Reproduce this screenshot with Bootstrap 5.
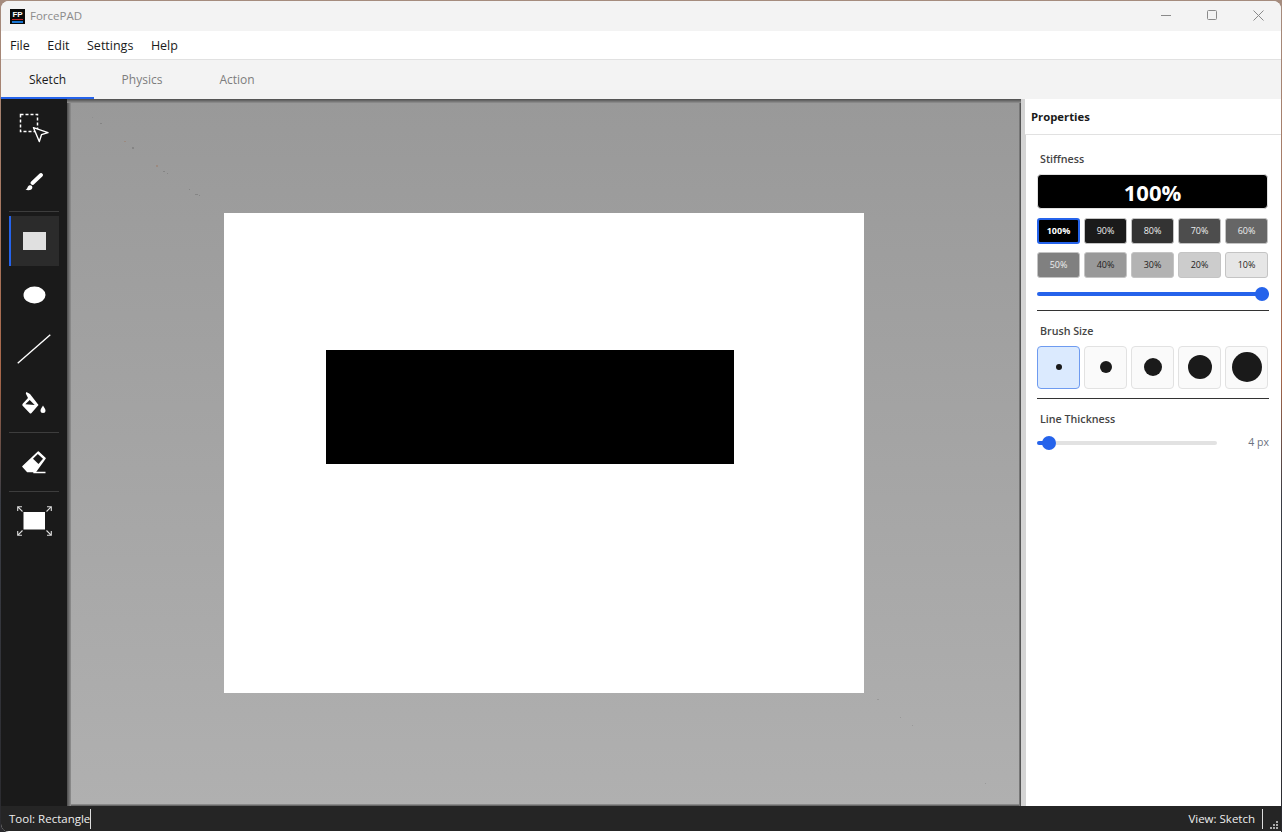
<!DOCTYPE html>
<html lang="en">

<head>
  <meta charset="UTF-8">
  <meta name="viewport" content="width=device-width, initial-scale=1.0">
  <title>ForcePAD</title>
  <link href="https://cdn.jsdelivr.net/npm/bootstrap@5.3.3/dist/css/bootstrap.min.css" rel="stylesheet">
  <style>
    html, body { height: 100%; overflow: hidden; }
    body {
      font-family: "Open Sans", "Noto Sans", sans-serif;
      font-size: 12.5px;
      background: linear-gradient(180deg, #a58c7e 0, #a8674a 45%, #3a3d45 60%, #2a2a2e 100%);
    }
    .app-window {
      margin: 1px 1px 0 1px;
      height: 831px;
      border-radius: 8px 8px 0 8px;
      overflow: hidden;
      background: #fff;
    }
    .title-bar { height: 30px; background: #f3f3f3; color: #8b8b8b; font-size: 11.5px; }
    .app-logo { width: 15px; height: 15px; margin: 0 5px 0 9px; }
    .win-btn { width: 46px; height: 28px; margin-bottom: 2px; }
    .menu-bar { height: 29px; background: #fff; border-bottom: 1px solid #e1e1e1; color: #1a1a1a; font-size: 12.5px; padding: 3px 0 0 9px; gap: 17.5px; }
    .tab-bar { height: 39px; background: #f3f3f3; font-size: 12px; }
    .tab-item { width: 96px; height: 39px; color: #7d7d7d; padding-top: 1px; }
    .tab-item.on { width: 93px; color: #1a1a1a; border-bottom: 2px solid #2563eb; padding-top: 3px; }
    .tab-item.last { width: 94px; }
    .work-area { height: 707px; }
    .tool-rail { width: 66px; background: #1a1a1a; padding: 4px 8px 0; gap: 4px; }
    .tool-btn { width: 50px; height: 50px; }
    .tool-btn.on { background: #2b2b2b; border-left: 2px solid #2563eb; padding-right: 2px; }
    .rail-sep { height: 1px; background: #3d3d3d; }
    .canvas-area {
      width: 954px;
      background: linear-gradient(180deg, #999 0, #b0b0b0 100%);
      box-shadow: inset 0 1px 0 #555, inset 0 2px 0 #666, inset 0 3px 0 #777, inset 0 4px 0 #888,
                  inset 1px 0 0 #555, inset 2px 0 0 #666, inset 3px 0 0 #777, inset 4px 0 0 #888,
                  inset -1px 0 0 #555, inset -2px 0 0 #777, inset 0 -1px 0 #666, inset 0 -2px 0 #888;
      position: relative;
    }
    .canvas-specks { position: absolute; left: 0; top: 0; }
    .paper { position: absolute; left: 157px; top: 114px; width: 640px; height: 480px; background: #fff; }
    .paper-rect { position: absolute; left: 102px; top: 137px; width: 408px; height: 114px; background: #000; }
    .split-bar { width: 5px; background: #d4d4d4; }
    .props-panel { width: 255px; background: #fff; }
    .props-head { height: 36px; margin-left: -1px; padding: 2px 0 0 6px; font-weight: 700; color: #1a1a1a; font-size: 11.3px; border-bottom: 1px solid #e1e1e1; background: #fff; }
    .props-body { padding: 16px 13px 0 11px; }
    .group-label { font-size: 10.7px; font-weight: 600; color: #444; padding-left: 3px; line-height: 16px; }
    .stiff-show { height: 35px; padding-top: 2px; background: #000; color: #fff; border: 1px solid #e0e0e0; border-radius: 4px; font-size: 22px; font-weight: 700; margin-top: 7px; }
    .swatch-row { gap: 4px; margin-top: 8px; }
    .swatch-row:first-child { margin-top: 9px; }
    .swatch-btn { width: 43px; height: 26px; border: 1px solid #c4c4c4; border-radius: 3px; font-size: 9px; font-weight: 400; }
    .swatch-btn.on { border: 2px solid #2563eb; font-weight: 700; }
    .size-row { gap: 4px; margin-top: 7px; }
    .size-btn { width: 43px; height: 43px; padding-bottom: 2px; border: 1px solid #e2e2e2; border-radius: 4px; background: #fafafa; }
    .size-btn.on { background: #dbeafe; border-color: #6e9bf0; }
    .size-dot { background: #1a1a1a; border-radius: 50%; }
    .dark-rule { height: 1px; background: #333; margin: 9px -1px 0 0; }
    .section-top { margin-top: 12px; }
    .app-range { display: block; width: calc(100% + 1px); height: 14px; padding: 0; margin-top: 9px; }
    .app-range::-webkit-slider-runnable-track {
      height: 4px; border-radius: 2px;
      background: linear-gradient(90deg, #2563eb var(--fill), #e2e2e2 var(--fill));
    }
    .app-range::-webkit-slider-thumb { width: 14px; height: 14px; margin-top: -5px; background: #2563eb; border: 0; border-radius: 50%; }
    .thick-row { margin: 8px -1px 0 0; }
    .thick-row .app-range { margin-top: 0; width: 180px; }
    .thick-value { color: #6b7280; font-size: 10.5px; width: 52px; text-align: right; }
    .status-bar { height: 25px; background: #252525; color: #eee; font-size: 11.5px; padding: 0 0 0 8px; }
    .status-sep { width: 1px; height: 20px; background: #ddd; }
    .status-view { margin-right: 7px; }
    .grip { width: 12px; height: 25px; margin-left: 6px; }
  </style>
</head>

<body>
  <div class="app-window d-flex flex-column">

    <div class="title-bar d-flex align-items-center flex-shrink-0">
      <svg class="app-logo" viewBox="0 0 15 15">
        <rect width="15" height="15" fill="#0a0a0a"/>
        <rect x="2" y="10" width="11" height="1" fill="#c62828"/>
        <rect x="2" y="12" width="11" height="2" fill="#1976d2"/>
        <text x="7.5" y="8" font-size="8" font-weight="700" font-family="Liberation Sans, sans-serif" fill="#fff" text-anchor="middle">FP</text>
      </svg>
      <span>ForcePAD</span>
      <div class="d-flex ms-auto">
        <div class="win-btn d-flex align-items-center justify-content-center">
          <svg width="10" height="10"><path d="M0 5.5H10" stroke="#8a8a8a"/></svg>
        </div>
        <div class="win-btn d-flex align-items-center justify-content-center">
          <svg width="10" height="10"><rect x=".5" y=".5" width="9" height="9" rx="1" fill="none" stroke="#8a8a8a"/></svg>
        </div>
        <div class="win-btn d-flex align-items-center justify-content-center">
          <svg width="11" height="11"><path d="M.5 .5L10.5 10.5M10.5 .5L.5 10.5" stroke="#8a8a8a"/></svg>
        </div>
      </div>
    </div>

    <div class="menu-bar d-flex align-items-center flex-shrink-0">
      <span>File</span><span>Edit</span><span>Settings</span><span>Help</span>
    </div>

    <div class="tab-bar d-flex flex-shrink-0">
      <div class="tab-item on d-flex align-items-center justify-content-center">Sketch</div>
      <div class="tab-item d-flex align-items-center justify-content-center">Physics</div>
      <div class="tab-item last d-flex align-items-center justify-content-center">Action</div>
    </div>

    <div class="work-area d-flex flex-shrink-0">
      <div class="tool-rail d-flex flex-column flex-shrink-0">
        <div class="tool-btn d-flex align-items-center justify-content-center">
          <svg width="32" height="30" viewBox="0 0 32 30">
            <rect x="2.500" y="1.500" width="17" height="17" fill="none" stroke="#fff" stroke-width="1.500" stroke-dasharray="3 2"/>
            <path d="M15.500 14.700L30 19.700L23.500 21.700L21.300 28.500Z" fill="#1a1a1a" stroke="#fff" stroke-width="1.400" stroke-linejoin="round"/>
          </svg>
        </div>
        <div class="tool-btn d-flex align-items-center justify-content-center">
          <svg width="18" height="18" viewBox="0 0 18 18">
            <path d="M16 2L7.500 10" stroke="#fff" stroke-width="3.800" stroke-linecap="round"/>
            <path d="M.5 16.500C2.500 16.500 2.200 13.500 4 12.500C6 11.600 7.800 13 7.300 15C6.800 17.200 3 18 .5 16.500Z" fill="#fff"/>
          </svg>
        </div>
        <div class="rail-sep"></div>
        <div class="tool-btn on d-flex align-items-center justify-content-center">
          <svg width="23" height="18"><rect width="23" height="18" fill="#e0e0e0"/></svg>
        </div>
        <div class="tool-btn d-flex align-items-center justify-content-center">
          <svg width="23" height="18"><ellipse cx="11.5" cy="9" rx="11" ry="8.500" fill="#fff"/></svg>
        </div>
        <div class="tool-btn d-flex align-items-center justify-content-center">
          <svg width="34" height="30"><path d="M.7 29.300L33.300 .7" stroke="#fff" stroke-width="1.4"/></svg>
        </div>
        <div class="tool-btn d-flex align-items-center justify-content-center">
          <svg width="24" height="22" viewBox="0 0 24 22">
            <path d="M4.400 0L8 2L16.500 13L9.300 21.200Q8.500 21.900 7.800 21.300L.4 13.500Q0 12.300 .9 11.500L6 6L3.800 1.500Z" fill="#fff"/>
            <path d="M3.300 12.300L7.700 8L12.700 13Z" fill="#1a1a1a"/>
            <path d="M21 13.500C21.800 15.300 23.500 16.500 23.500 18.500A2.500 2.500 0 0 1 18.500 18.500C18.500 16.500 20.200 15.300 21 13.500Z" fill="#fff"/>
          </svg>
        </div>
        <div class="rail-sep"></div>
        <div class="tool-btn d-flex align-items-center justify-content-center">
          <svg width="24" height="23" viewBox="0 0 24 23">
            <path d="M16.300 1L23 7.300L13.500 20.500H5.500L1 15.500Z" fill="#fff" stroke="#fff" stroke-width="1.600" stroke-linejoin="round"/>
            <path d="M15.800 3L21 7.700L16.500 13L11 7.800Z" fill="#1a1a1a"/>
            <path d="M11.300 21.500H23.500" stroke="#fff" stroke-width="1.500"/>
          </svg>
        </div>
        <div class="rail-sep"></div>
        <div class="tool-btn d-flex align-items-center justify-content-center">
          <svg width="35" height="30" viewBox="0 0 35 30">
            <rect x="6.500" y="6" width="21.500" height="17.500" fill="#fff"/>
            <path d="M.7 5V.7H5M.7 .7L5.500 5.500M30 .7H34.300V5M34.300 .7L29.500 5.500M.7 25V29.300H5M.7 29.300L5.500 24.500M34.300 25V29.300H30M34.300 29.300L29.500 24.500" fill="none" stroke="#ddd" stroke-width="1.100"/>
          </svg>
        </div>
      </div>

      <div class="canvas-area flex-shrink-0">
        <svg class="canvas-specks" width="954" height="707" fill="#858585">
          <rect x="25" y="18" width="1" height="1" fill="#8f8f8f"/><rect x="33" y="24" width="2" height="1"/>
          <rect x="57" y="42" width="2" height="1" fill="#9c8a80"/><rect x="65" y="48" width="2" height="2"/>
          <rect x="89" y="66" width="2" height="2" fill="#9c8a80"/><rect x="96" y="72" width="2" height="1"/>
          <rect x="100" y="74" width="1" height="1"/><rect x="122" y="90" width="1" height="1"/>
          <rect x="128" y="95" width="3" height="1"/><rect x="132" y="96" width="1" height="1"/>
          <rect x="810" y="600" width="2" height="1" fill="#999"/><rect x="833" y="618" width="1" height="1" fill="#999"/>
          <rect x="845" y="626" width="1" height="1" fill="#999"/><rect x="918" y="684" width="1" height="1" fill="#999"/>
        </svg>
        <div class="paper">
          <div class="paper-rect"></div>
        </div>
      </div>

      <div class="split-bar flex-shrink-0"></div>

      <div class="props-panel d-flex flex-column flex-shrink-0">
        <div class="props-head d-flex align-items-center">Properties</div>
        <div class="props-body">
          <div class="group-label">Stiffness</div>
          <div class="stiff-show d-flex align-items-center justify-content-center">100%</div>
          <div id="swatches"></div>
          <input class="form-range app-range" type="range" min="0" max="100" value="100" style="--fill: 100%">
          <div class="dark-rule"></div>

          <div class="group-label section-top">Brush Size</div>
          <div class="size-row d-flex">
            <div class="size-btn on d-flex align-items-center justify-content-center"><div class="size-dot" style="width:6px;height:6px"></div></div>
            <div class="size-btn d-flex align-items-center justify-content-center"><div class="size-dot" style="width:12px;height:12px"></div></div>
            <div class="size-btn d-flex align-items-center justify-content-center"><div class="size-dot" style="width:18px;height:18px"></div></div>
            <div class="size-btn d-flex align-items-center justify-content-center"><div class="size-dot" style="width:24px;height:24px"></div></div>
            <div class="size-btn d-flex align-items-center justify-content-center"><div class="size-dot" style="width:30px;height:30px"></div></div>
          </div>
          <div class="dark-rule"></div>

          <div class="group-label section-top">Line Thickness</div>
          <div class="thick-row d-flex align-items-center">
            <input class="form-range app-range" type="range" min="1" max="100" value="4" style="--fill: 7%">
            <span class="thick-value">4 px</span>
          </div>
        </div>
      </div>
    </div>

    <div class="status-bar d-flex align-items-center flex-shrink-0">
      <span>Tool: Rectangle</span><span class="status-sep"></span>
      <span class="status-view ms-auto">View: Sketch</span><span class="status-sep"></span>
      <svg class="grip" viewBox="1 -1 12 25" fill="#aaa">
        <rect x="8" y="14" width="2" height="2"/><rect x="5" y="17" width="2" height="2"/><rect x="8" y="17" width="2" height="2"/>
        <rect x="2" y="20" width="2" height="2"/><rect x="5" y="20" width="2" height="2"/><rect x="8" y="20" width="2" height="2"/>
      </svg>
    </div>
  </div>

  <script>
    // stiffness swatches, black to light grey in two rows
    const levels = [
      [100, '#000', '#fff'], [90, '#1a1a1a', '#eee'], [80, '#333', '#eee'], [70, '#4d4d4d', '#eee'], [60, '#666', '#eee'],
      [50, '#808080', '#eee'], [40, '#999', '#222'], [30, '#b3b3b3', '#222'], [20, '#ccc', '#222'], [10, '#e6e6e6', '#222']
    ];
    const holder = document.getElementById('swatches');
    for (let r = 0; r < 2; r++) {
      const row = document.createElement('div');
      row.className = 'swatch-row d-flex';
      levels.slice(r * 5, r * 5 + 5).forEach(function(l) {
        const b = document.createElement('div');
        b.className = 'swatch-btn d-flex align-items-center justify-content-center' + (l[0] === 100 ? ' on' : '');
        b.style.background = l[1];
        b.style.color = l[2];
        b.textContent = l[0] + '%';
        row.appendChild(b);
      });
      holder.appendChild(row);
    }
  </script>
  <script src="https://cdn.jsdelivr.net/npm/bootstrap@5.3.3/dist/js/bootstrap.bundle.min.js"></script>
</body>

</html>
